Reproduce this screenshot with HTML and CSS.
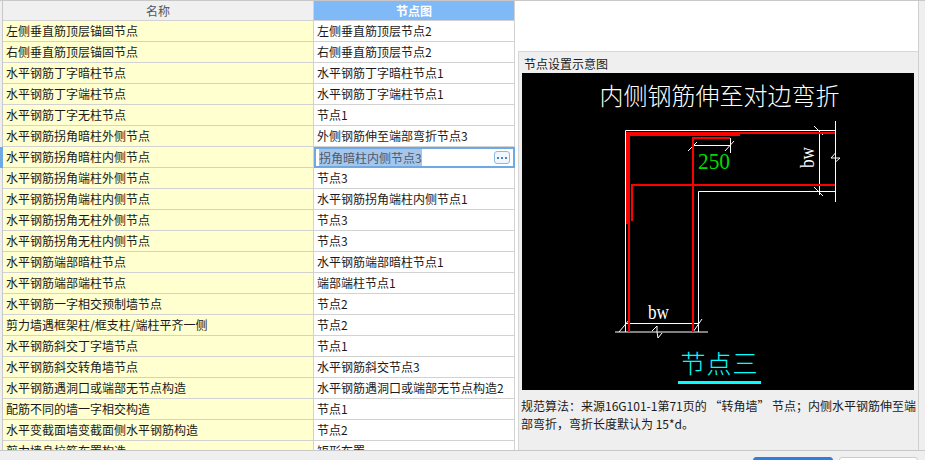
FILE: index.html
```html
<!DOCTYPE html>
<html lang="zh-CN">
<head>
    <meta charset="UTF-8">
    <meta name="viewport" content="width=device-width, initial-scale=1.0">
    <title>节点设置</title>
    <link rel="stylesheet" href="styles.css">
</head>
<body>
    <div class="main">
        <table class="grid">
            <colgroup><col class="col-name"><col class="col-node"></colgroup>
            <thead>
                <tr><th>名称</th><th class="active">节点图</th></tr>
            </thead>
            <tbody>
                <tr><td>左侧垂直筋顶层锚固节点</td><td>左侧垂直筋顶层节点2</td></tr>
                <tr><td>右侧垂直筋顶层锚固节点</td><td>右侧垂直筋顶层节点2</td></tr>
                <tr><td>水平钢筋丁字暗柱节点</td><td>水平钢筋丁字暗柱节点1</td></tr>
                <tr><td>水平钢筋丁字端柱节点</td><td>水平钢筋丁字端柱节点1</td></tr>
                <tr><td>水平钢筋丁字无柱节点</td><td>节点1</td></tr>
                <tr><td>水平钢筋拐角暗柱外侧节点</td><td>外侧钢筋伸至端部弯折节点3</td></tr>
                <tr class="current">
                    <td>水平钢筋拐角暗柱内侧节点</td>
                    <td class="editing">
                        <div class="editor">
                            <span class="sel">拐角暗柱内侧节点3</span>
                            <span class="more"><i></i><i></i><i></i></span>
                        </div>
                    </td>
                </tr>
                <tr><td>水平钢筋拐角端柱外侧节点</td><td>节点3</td></tr>
                <tr><td>水平钢筋拐角端柱内侧节点</td><td>水平钢筋拐角端柱内侧节点1</td></tr>
                <tr><td>水平钢筋拐角无柱外侧节点</td><td>节点3</td></tr>
                <tr><td>水平钢筋拐角无柱内侧节点</td><td>节点3</td></tr>
                <tr><td>水平钢筋端部暗柱节点</td><td>水平钢筋端部暗柱节点1</td></tr>
                <tr><td>水平钢筋端部端柱节点</td><td>端部端柱节点1</td></tr>
                <tr><td>水平钢筋一字相交预制墙节点</td><td>节点2</td></tr>
                <tr><td>剪力墙遇框架柱/框支柱/端柱平齐一侧</td><td>节点2</td></tr>
                <tr><td>水平钢筋斜交丁字墙节点</td><td>节点1</td></tr>
                <tr><td>水平钢筋斜交转角墙节点</td><td>水平钢筋斜交节点3</td></tr>
                <tr><td>水平钢筋遇洞口或端部无节点构造</td><td>水平钢筋遇洞口或端部无节点构造2</td></tr>
                <tr><td>配筋不同的墙一字相交构造</td><td>节点1</td></tr>
                <tr><td>水平变截面墙变截面侧水平钢筋构造</td><td>节点2</td></tr>
                <tr><td>剪力墙身拉筋布置构造</td><td>矩形布置</td></tr>
            </tbody>
        </table>

        <div class="side">
            <div class="panel">
                <div class="panel-title">节点设置示意图</div>
                <svg class="sketch" width="392" height="317" viewBox="522 73 392 317">
                    <rect x="522" y="73" width="392" height="317" fill="#000"/>
                    <text class="cad-title" x="719.5" y="105" text-anchor="middle">内侧钢筋伸至对边弯折</text>

                    <!-- 墙轮廓 -->
                    <g fill="none" stroke="#fff" stroke-width="1">
                        <path d="M835 130.5H625.5V332"/>
                        <path d="M835 191.5H698.5V332"/>
                        <path d="M692.5 145.5H731M730.5 138V153"/>
                        <path d="M819.5 130V195M835.5 121V202M814 126L823 135M814 187L823 196"/>
                        <path d="M688 151L697 142M725 151L734 141"/>
                        <path d="M835.5 153L831 158H840L835.5 162"/>
                        <path d="M625.5 323.5H698.5M615 332H708M619 332L629 320M693 332L702 319"/>
                        <path d="M652 331L657 326V332L658 338L662 333"/>
                    </g>

                    <!-- 钢筋 -->
                    <g fill="#f00">
                        <rect x="626" y="132" width="114" height="4"/>
                        <rect x="626" y="132" width="209" height="2"/>
                        <rect x="626" y="132" width="4" height="92"/>
                        <rect x="628" y="132" width="2" height="200"/>
                        <rect x="631" y="184" width="204" height="2"/>
                        <rect x="631" y="184" width="2" height="37"/>
                        <rect x="692" y="137" width="2" height="195"/>
                        <rect x="692" y="137" width="38" height="2"/>
                    </g>

                    <text class="cad-num" x="698" y="169" textLength="32" lengthAdjust="spacingAndGlyphs">250</text>
                    <text class="cad-dim" transform="translate(814 168) rotate(-90)" textLength="21" lengthAdjust="spacingAndGlyphs">bw</text>
                    <text class="cad-dim" x="648" y="319" textLength="21" lengthAdjust="spacingAndGlyphs">bw</text>
                    <text class="cad-node" x="719.5" y="373" text-anchor="middle">节点三</text>
                    <rect x="678" y="381" width="83" height="3" fill="#0ff"/>
                </svg>
                <p class="note">规范算法：来源16G101-1第71页的 “转角墙” 节点；内侧水平钢筋伸至端部弯折，弯折长度默认为 15*d。</p>
            </div>
        </div>
    </div>

    <div class="footer">
        <button class="btn btn-primary"></button>
        <button class="btn"></button>
    </div>
</body>
</html>
```

FILE: styles.css
```css
html, body {
    margin: 0;
    height: 460px;
    overflow: hidden;
}
body {
    background: #efefef;
    font-family: "Noto Sans CJK SC", sans-serif;
    font-size: 12px;
    color: #1a1a1a;
}

.main {
    display: flex;
    height: 451px;
    box-sizing: border-box;
    border-top: 1px solid #c8c8c8;
    border-bottom: 1px solid #c8c8c8;
    overflow: hidden;
}

/* 左侧表格 */
.grid {
    flex: none;
    width: 513px;
    height: 0;
    margin-left: 2px;
    table-layout: fixed;
    border-collapse: separate;
    border-spacing: 0;
    border-left: 1px solid #c8c8c8;
    box-sizing: border-box;
    background: #fff;
}
.col-name { width: 311px; }
.col-node { width: 201px; }
.grid th, .grid td {
    box-sizing: border-box;
    height: 21px;
    padding: 0 3px;
    border-right: 1px solid #d2d2d2;
    border-bottom: 1px solid #d2d2d2;
    font-weight: normal;
    line-height: 20px;
    white-space: nowrap;
    overflow: hidden;
}
.grid th {
    height: 20px;
    background: #f0f0f0;
    color: #555;
    line-height: 19px;
}
.grid th.active {
    background: #7fb9f8;
    color: #fff;
    font-weight: bold;
}
.grid td:first-child { background: #ffffcf; }
.current td:first-child { box-shadow: -3px 0 0 #6ea9e6; }

.grid td.editing { padding: 0; border: 0; }
.editor {
    display: flex;
    align-items: center;
    justify-content: space-between;
    box-sizing: border-box;
    height: 21px;
    padding: 0 3px 0 3px;
    border: 2px solid #6ea9e6;
    line-height: 17px;
}
.sel { background: #a6c5ea; color: #4a5a6e; }
.more {
    display: flex;
    align-items: center;
    justify-content: center;
    gap: 2px;
    box-sizing: border-box;
    width: 16px;
    height: 13px;
    border: 1px solid #8db8e6;
    border-radius: 3px;
    background: #f2f7fd;
}
.more i {
    width: 2px;
    height: 2px;
    background: #4d83bd;
}

/* 右侧示意图 */
.side {
    flex: none;
    box-sizing: border-box;
    width: 404px;
    padding: 50px 0 0 3px;
    border-right: 1px solid #cfcfcf;
    background: #fff;
}
.panel {
    box-sizing: border-box;
    height: 399px;
    padding: 1px 3px 0;
    border: 1px solid #d6d6d6;
    border-width: 1px 0 0 1px;
    background: #efefef;
}
.panel-title {
    height: 20px;
    padding-left: 2px;
    line-height: 22px;
}
.sketch { display: block; }
.note {
    margin: 7px -3px 0 -1px;
    line-height: 18px;
}

.cad-title {
    fill: #fff;
    font-size: 24px;
    font-weight: 300;
}
.cad-num {
    fill: #00d800;
    font-family: "Liberation Serif", serif;
    font-size: 24px;
}
.cad-dim {
    fill: #fff;
    font-family: "Liberation Serif", serif;
    font-size: 20px;
}
.cad-node {
    fill: #0ff;
    font-size: 25px;
    font-weight: 300;
    letter-spacing: 1px;
}

.footer {
    display: flex;
    justify-content: flex-end;
    gap: 6px;
    padding: 6px 7px 0 0;
}
.btn {
    width: 79px;
    height: 24px;
    padding: 0;
    border: 1px solid #ccc;
    border-radius: 3px;
    background: #fff;
}
.btn-primary {
    width: 80px;
    border-color: #2f80dc;
    background: #2f80dc;
}
```
